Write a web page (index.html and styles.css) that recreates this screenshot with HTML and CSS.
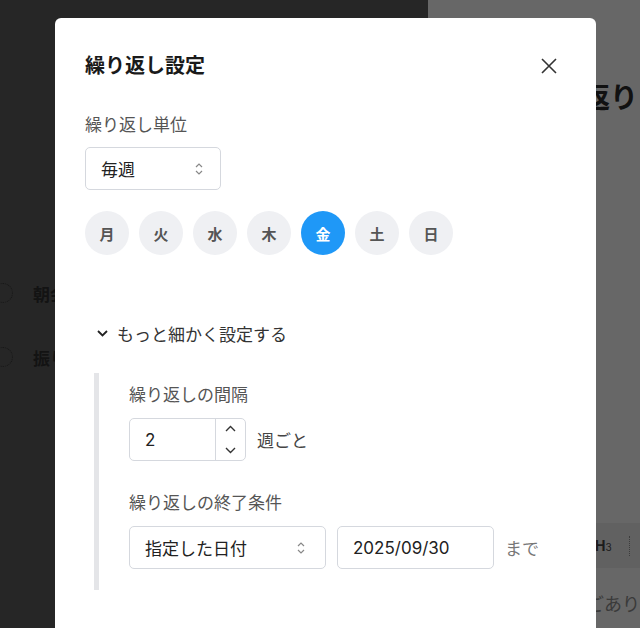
FILE: index.html
```html
<!DOCTYPE html>
<html lang="ja">
<head>
    <meta charset="UTF-8">
    <meta name="viewport" content="width=device-width, initial-scale=1.0">
    <title>繰り返し設定</title>
    <link rel="stylesheet" href="styles.css">
</head>
<body>

    <!-- Page behind the dialog (already dimmed) -->
    <div class="app">
        <aside class="sidebar">
            <div class="side-item"><span class="dot-ring"></span><span>朝会メモ</span></div>
            <div class="side-item"><span class="dot-ring"></span><span>振り返り</span></div>
        </aside>
        <main class="main">
            <h1 class="page-title">振り返り</h1>
            <div class="toolbar">
                <span class="tool-h">H<small>3</small></span>
                <span class="tool-sep"></span>
            </div>
            <p class="page-text">ごあり</p>
        </main>
    </div>

    <!-- Repeat settings dialog -->
    <div class="modal">
        <div class="modal-head">
            <h2>繰り返し設定</h2>
            <button class="close" aria-label="閉じる">
                <svg width="16" height="16" viewBox="0 0 16 16">
                    <path d="M1 1 L15 15 M15 1 L1 15" stroke="#333" stroke-width="1.6" fill="none"/>
                </svg>
            </button>
        </div>

        <div class="field-label first">繰り返し単位</div>
        <div class="select select-unit">
            <span>毎週</span>
            <svg class="updown" width="8" height="14" viewBox="0 0 8 14">
                <path d="M1 5 L4 2 L7 5 M1 9 L4 12 L7 9" stroke="#888" stroke-width="1.2" fill="none"/>
            </svg>
        </div>

        <div class="days">
            <span class="day">月</span>
            <span class="day">火</span>
            <span class="day">水</span>
            <span class="day">木</span>
            <span class="day active">金</span>
            <span class="day">土</span>
            <span class="day">日</span>
        </div>

        <div class="more">
            <svg width="11" height="7" viewBox="0 0 11 7">
                <path d="M1 1 L5.5 5.5 L10 1" stroke="#222" stroke-width="1.8" fill="none"/>
            </svg>
            <span>もっと細かく設定する</span>
        </div>

        <div class="more-body">
            <div class="field-label">繰り返しの間隔</div>
            <div class="row">
                <div class="number">
                    <span class="num-val">2</span>
                    <span class="num-step">
                        <svg width="11" height="7" viewBox="0 0 11 7"><path d="M1 6 L5.5 1.5 L10 6" stroke="#333" stroke-width="1.4" fill="none"/></svg>
                        <svg width="11" height="7" viewBox="0 0 11 7"><path d="M1 1 L5.5 5.5 L10 1" stroke="#333" stroke-width="1.4" fill="none"/></svg>
                    </span>
                </div>
                <span class="unit">週ごと</span>
            </div>

            <div class="field-label second">繰り返しの終了条件</div>
            <div class="row">
                <div class="select select-end">
                    <span>指定した日付</span>
                    <svg class="updown" width="8" height="14" viewBox="0 0 8 14">
                        <path d="M1 5 L4 2 L7 5 M1 9 L4 12 L7 9" stroke="#888" stroke-width="1.2" fill="none"/>
                    </svg>
                </div>
                <div class="date">2025/09/30</div>
                <span class="unit muted">まで</span>
            </div>
        </div>
    </div>

</body>
</html>
```

FILE: styles.css
```css
/* Basic Reset */
* {
    margin: 0;
    padding: 0;
    box-sizing: border-box;
}

html, body {
    width: 640px;
    height: 628px;
    overflow: hidden;
}

body {
    font-family: "Inter", "Noto Sans CJK JP", sans-serif;
    color: #222;
    position: relative;
}

.app {
    display: flex;
    height: 628px;
}

.sidebar {
    width: 428px;
    background-color: #262626;
    padding-top: 279px;
}

.side-item {
    display: flex;
    align-items: center;
    height: 28px;
    margin-bottom: 36px;
    font-size: 17px;
    font-weight: bold;
    color: #131313;
    gap: 20px;
}

.dot-ring {
    width: 20px;
    height: 20px;
    margin-left: -7px;
    border: 1.5px dotted #161616;
    border-radius: 50%;
}

.main {
    flex: 1;
    background-color: #676767;
    padding-left: 127px;
    padding-top: 80px;
    white-space: nowrap;
    overflow: hidden;
}

.page-title {
    margin-left: -29px;
    font-size: 28px;
    line-height: 36px;
    color: #111;
}

.toolbar {
    display: flex;
    align-items: center;
    height: 45px;
    margin-top: 407px;
    margin-left: -127px;
    padding-left: 167px;
    background-color: #616161;
}

.tool-h {
    font-size: 14px;
    font-weight: bold;
    color: #1c1c1c;
}

.tool-h small {
    font-size: 10px;
    font-weight: normal;
}

.tool-sep {
    width: 0;
    height: 20px;
    margin-left: 17px;
    border-left: 1px dotted #3c3c3c;
}

.page-text {
    margin-top: 23px;
    margin-left: 31px;
    font-size: 18px;
    line-height: 28px;
    color: #3a3a3a;
}

/* Dialog */
.modal {
    position: absolute;
    left: 55px;
    top: 18px;
    width: 541px;
    height: 640px;
    background-color: white;
    border-radius: 6px;
    padding: 34px 35px 0 30px;
}

.modal-head {
    display: flex;
    justify-content: space-between;
    align-items: center;
    height: 28px;
}

.modal-head h2 {
    font-size: 20px;
    line-height: 28px;
    font-weight: bold;
    color: #1a1a1a;
}

.close {
    width: 24px;
    height: 24px;
    border: none;
    background: none;
    display: flex;
    align-items: center;
    justify-content: center;
    cursor: pointer;
}

.field-label {
    font-size: 17px;
    line-height: 24px;
    color: #555;
}

.field-label.first {
    margin-top: 33px;
}

.field-label.second {
    margin-top: 30px;
}

.select {
    display: flex;
    justify-content: space-between;
    align-items: center;
    height: 43px;
    border: 1px solid #d5d8de;
    border-radius: 5px;
    padding: 0 17px 0 15px;
    font-size: 17px;
    color: #222;
}

.select-unit {
    width: 136px;
    margin-top: 10px;
}

.select-end {
    width: 197px;
    padding-right: 20px;
}

/* Weekday picker */
.days {
    display: flex;
    gap: 10px;
    margin-top: 21px;
}

.day {
    width: 44px;
    height: 44px;
    border-radius: 50%;
    background-color: #eff0f3;
    color: #555;
    font-size: 15px;
    font-weight: bold;
    display: flex;
    align-items: center;
    justify-content: center;
}

.day.active {
    background-color: #1f98f7;
    color: white;
}

/* Advanced section */
.more {
    display: flex;
    align-items: center;
    gap: 9px;
    margin-top: 66px;
    padding-left: 12px;
    height: 24px;
    font-size: 17px;
    color: #333;
}

.more-body {
    margin-top: 28px;
    margin-left: 9px;
    border-left: 5px solid #e4e5e8;
    padding: 10px 0 21px 30px;
}

.row {
    display: flex;
    align-items: center;
    gap: 11px;
    margin-top: 11px;
}

.number {
    display: flex;
    width: 117px;
    height: 43px;
    border: 1px solid #d5d8de;
    border-radius: 5px;
}

.num-val {
    flex: 1;
    display: flex;
    align-items: center;
    padding-left: 15px;
    font-size: 17px;
}

.num-step {
    width: 30px;
    padding: 6px 0;
    border-left: 1px solid #d5d8de;
    display: flex;
    flex-direction: column;
    align-items: center;
    justify-content: space-between;
}

.date {
    width: 157px;
    height: 43px;
    border: 1px solid #d5d8de;
    border-radius: 5px;
    padding-left: 15px;
    display: flex;
    align-items: center;
    font-size: 17px;
    color: #222;
}

.unit {
    font-size: 17px;
    color: #444;
}

.unit.muted {
    color: #777;
}
```
